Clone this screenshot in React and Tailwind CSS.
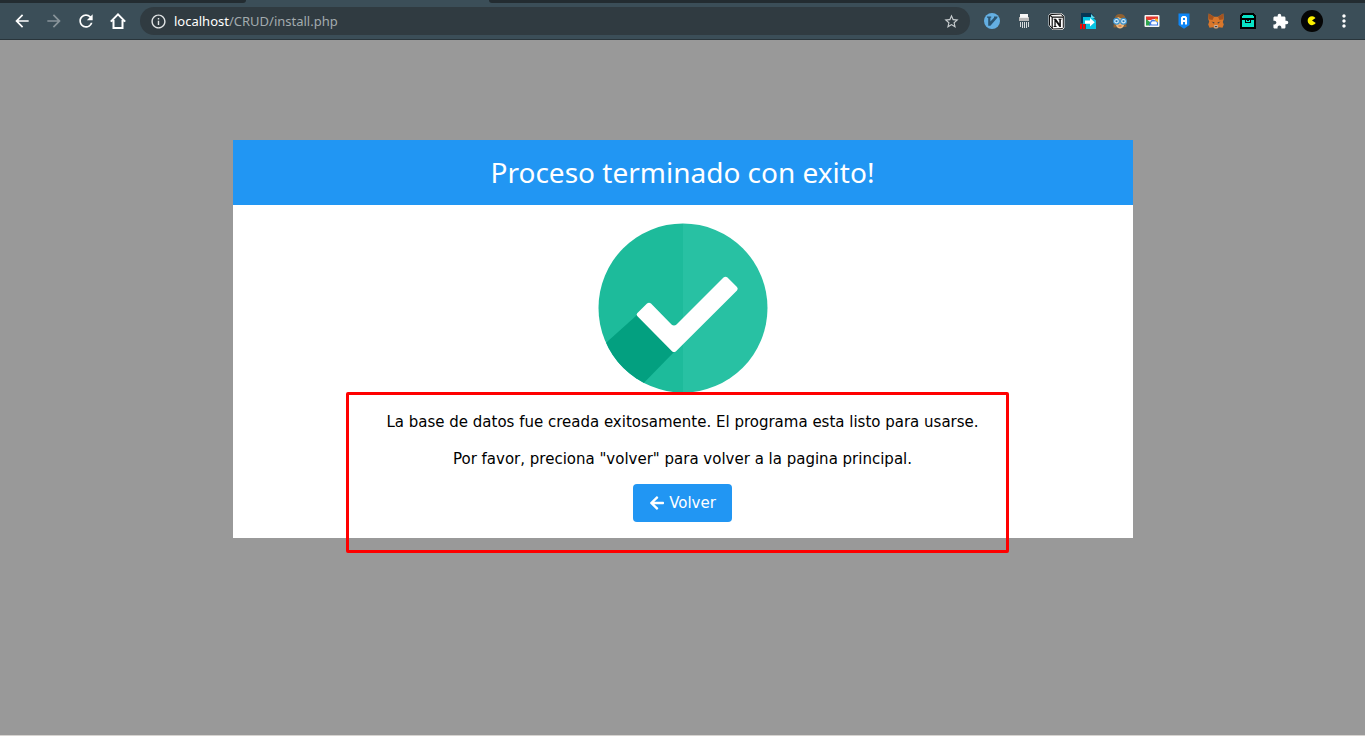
import React from "react";
import { FaArrowLeft } from "react-icons/fa";
import {
  MdArrowBack,
  MdArrowForward,
  MdRefresh,
  MdInfoOutline,
  MdStarBorder,
  MdExtension,
  MdMoreVert,
} from "react-icons/md";

function ToolButton({ label, children, className = "" }) {
  return (
    <button
      type="button"
      aria-label={label}
      className={`flex h-8 w-8 shrink-0 items-center justify-center ${className}`}
    >
      {children}
    </button>
  );
}

function HomeIcon() {
  return (
    <svg width="16" height="16" viewBox="0 0 16 16" fill="none" stroke="#fff" strokeWidth="2">
      <path d="M0.8 8.6 8 1.4l7.2 7.2M3.5 7v8h9V7" />
    </svg>
  );
}

function VimIcon() {
  return (
    <svg width="16" height="16" viewBox="0 0 16 16">
      <circle cx="8" cy="8" r="8" fill="#64afe2" />
      <path d="M3 3.6h4.2v1.2h-.8v3.8L10 4.800V3.600h3.400v1.200L6.400 12.800H4.200V4.800H3z" fill="#2b5470" />
    </svg>
  );
}

function ShredderIcon() {
  return (
    <svg width="12" height="14" viewBox="0 0 12 14">
      <path d="M2 0h8v4H2z" fill="#f8f8f8" />
      <path d="M1 3h10v4H1z" fill="#b9b9b9" />
      <path d="M2 3h8v1H2z" fill="#eee" />
      <path d="M2.500 8v5M4.500 8v6M6.500 8v6M8.500 8v6M10.500 8v5" stroke="#d8dcde" strokeWidth="1" />
    </svg>
  );
}

function NotionIcon() {
  return (
    <svg width="17" height="17" viewBox="0 0 17 17">
      <path d="M1 2 2 1l11-.500L16 2.800V15l-1.200 1.200-10.300.300L1 12.500z" fill="#fff" stroke="#e9e9e9" />
      <path d="M1.500 2.200 2.500 1.600l10-.500L15.300 3v11.600l-.8 1-9.800.400-3.200-3.800z" fill="#fff" stroke="#111" strokeWidth="1" />
      <path d="m1.600 2 2.600 2.200h11M4.200 4.200v11.500" fill="none" stroke="#111" strokeWidth="1.200" />
      <path d="M5.600 5.800H8l3.300 4.600V6.800l-.9-.3v-.7h3.300v.7l-.8.300V14h-1.400L7.700 8.700v4.200l1 .300v.700H5.600v-.7l.8-.3V6.800l-.8-.3z" fill="#111" />
    </svg>
  );
}

function TransferIcon() {
  return (
    <svg width="18" height="18" viewBox="0 0 18 18">
      <path d="M2 1h10l3 3v7H2z" fill="#053655" />
      <path d="M4 5h9l4 3.500V17H4z" fill="#08c5e4" />
      <path d="M12 2v4h4z" fill="#63d6e7" />
      <path d="M6 8.500h5V6l4.700 4.200L11 14.500v-2.700H6z" fill="#fff" />
      <path d="M1 12h6v5H1z" fill="#3b4e58" />
      <path d="M1 12h2v5H1zM4 12h2v5H4z" fill="#f80505" />
    </svg>
  );
}

function FaceIcon() {
  return (
    <svg width="16" height="16" viewBox="0 0 16 16">
      <path d="M1.500 14.500C2 9 1.500 1 8 1s6 6 6.500 13z" fill="#8f6131" />
      <path d="M3.500 7 6 4l6.500 3v4Q11 15.500 8 15.500T3.500 11z" fill="#efbc7f" />
      <circle cx="4.500" cy="8.200" r="2.900" fill="#e6f6ff" stroke="#358fcc" strokeWidth="1.200" />
      <circle cx="11.500" cy="8.200" r="2.900" fill="#e6f6ff" stroke="#358fcc" strokeWidth="1.200" />
      <path d="M3.500 7.200h2v2h-2zm7 0h2v2h-2z" fill="#2478b2" />
      <path d="M6.500 13h3" stroke="#b65537" />
    </svg>
  );
}

function GalleryIcon() {
  return (
    <svg width="16" height="14" viewBox="0 0 16 14">
      <rect x=".5" y="1" width="15" height="12" rx="1" fill="#f5f5f5" />
      <path d="M2 2.500h12V6Q10 4 7 6L4 6 2 9z" fill="#e5382e" />
      <path d="M2 5l4 3v3.500H2z" fill="#2ea44d" />
      <path d="M11 4.500q2 0 3 1v3h-3z" fill="#fbc02d" />
      <path d="M6 8q2-4 6-1l2 1.500v3H5z" fill="#3f7be8" />
      <path d="M7.500 10.500a2 2 0 0 1 2.500-3 2 2 0 0 1 3 1.500v1.500z" fill="#fff" />
    </svg>
  );
}

function BadgeIcon() {
  return (
    <svg width="12" height="16" viewBox="0 0 12 16">
      <path d="M.5.500h11V12L6 15.800.500 12z" fill="#0e86f5" />
      <path d="M3 11.500V4.500L4.500 3h3L9 4.500v7H7V9H5v2.500zM5 5v2h2V5z" fill="#fff" fillRule="evenodd" />
    </svg>
  );
}

function FoxIcon() {
  return (
    <svg width="16" height="16" viewBox="0 0 16 16">
      <path d="M.7.500 6 3.800h4L15.300.500l.5 5.500-1 3 1 2.500-1.300 3.300-3.500-.5L9 15.500H7L5 14.300l-3.500.500L.2 11.500l1-3-1-2.500z" fill="#d9772b" />
      <path d="M.7.500 6 3.800 4.500 7l-4-.8zM15.300.500 10 3.800 11.500 7l4-.8z" fill="#a3531f" />
      <path d="m3.500 8.500 3 1-.5 1.200zM12.500 8.500l-3 1 .5 1.200z" fill="#343b42" />
      <path d="m5.800 12.500 2.200-.5 2.200.5-.7 2.700h-3z" fill="#c7b8ac" />
      <path d="M6.800 13h2.400v1.200H6.800z" fill="#4a4442" />
    </svg>
  );
}

function ChestIcon() {
  return (
    <svg width="16" height="16" viewBox="0 0 16 16" shapeRendering="crispEdges">
      <path d="M2 0h12v1h1v1h1v14H0V2h1V1h1z" fill="#000" />
      <path d="M3 2h10v1h1v2H2V3h1z" fill="#08e2c6" />
      <path d="M2 7h5v1h2V7h5v7H2z" fill="#08e2c6" />
      <path d="M5 7h6v3H5z" fill="#000" />
      <path d="M6 7h4v2H6z" fill="#08e2c6" />
      <path d="M7 7h2v1H7z" fill="#000" />
    </svg>
  );
}

function ProfileIcon() {
  return (
    <svg width="22" height="22" viewBox="0 0 22 22">
      <circle cx="11" cy="11" r="11" fill="#050505" />
      <path d="M14.500 8A4.400 4.400 0 1 0 14.800 13L11 10.500z" fill="#fcf000" />
    </svg>
  );
}

const extensions = [
  ["Vim", VimIcon],
  ["Limpiar", ShredderIcon],
  ["Notion", NotionIcon],
  ["Transferir", TransferIcon],
  ["Avatar", FaceIcon],
  ["Galería", GalleryIcon],
  ["Insignia", BadgeIcon],
  ["MetaMask", FoxIcon],
  ["Cofre", ChestIcon],
];

function BrowserBar() {
  return (
    <header className="shrink-0 bg-[#3b4e58]">
      <div className="flex h-[3px]">
        <div className="w-[246px] rounded-br-sm bg-[#232c31]" />
        <div className="w-[243px]" />
        <div className="flex-1 rounded-bl-sm bg-[#232c31]" />
      </div>
      <div className="flex h-[37px] items-center border-b border-[#29353b] pl-[6px] pr-[5px]">
        <ToolButton label="Atrás" className="text-white"><MdArrowBack size={20} /></ToolButton>
        <ToolButton label="Adelante" className="text-[#89949a]"><MdArrowForward size={20} /></ToolButton>
        <ToolButton label="Recargar" className="text-white"><MdRefresh size={20} /></ToolButton>
        <ToolButton label="Inicio"><HomeIcon /></ToolButton>
        <div className="ml-[6px] flex h-7 min-w-0 flex-1 items-center rounded-full bg-[#303b41] px-[10px]">
          <MdInfoOutline size={17} className="shrink-0 text-[#e2e5e6]" />
          <a
            href="#install"
            className="ml-[7px] min-w-0 flex-1 truncate font-['Noto_Sans',sans-serif] text-[13px] leading-5 text-[#a3abae]"
          >
            <span className="text-white">localhost</span>/CRUD/install.php
          </a>
          <button type="button" aria-label="Marcar página" className="text-[#c8cdcf]">
            <MdStarBorder size={17} />
          </button>
        </div>
        <div className="ml-[6px] flex">
          {extensions.map(([label, Icon]) => (
            <ToolButton key={label} label={label}><Icon /></ToolButton>
          ))}
          <ToolButton label="Extensiones" className="text-white"><MdExtension size={17} /></ToolButton>
          <ToolButton label="Perfil"><ProfileIcon /></ToolButton>
          <ToolButton label="Menú" className="text-white"><MdMoreVert size={20} /></ToolButton>
        </div>
      </div>
    </header>
  );
}

function SuccessIcon() {
  return (
    <svg width="170" height="170" viewBox="0 0 170 170" role="img" aria-label="Éxito">
      <defs>
        <clipPath id="disc"><circle cx="85" cy="85" r="84.500" /></clipPath>
      </defs>
      <g clipPath="url(#disc)">
        <path d="M0 0h85v170H0z" fill="#1dbb9b" />
        <path d="M85 0h85v170H85z" fill="#28c1a3" />
        <path d="M39 92 0 127v43h36l41-42z" fill="#03a080" />
      </g>
      <path
        d="M39.200 90.200Q38 91.500 39.200 93L74 128.200Q76 130 78 128.200L139 67.500Q140.500 65.800 139 64L129.500 54.500Q127.500 53 125.500 54.500L78.500 101.500Q76 103.500 73.500 101.500L53 80.500Q51 79 49 80.500Z"
        fill="#fff"
      />
    </svg>
  );
}

export default function App() {
  return (
    <div className="flex min-h-screen flex-col border-b border-[#d7d4d1] bg-[#999] font-[Verdana,'DejaVu_Sans',sans-serif] text-[15px] text-black">
      <BrowserBar />
      <main className="flex-1 px-4 pt-[100px] pb-8">
        <section className="relative mx-auto max-w-[900px] bg-white text-center">
          <h1 className="bg-[#2196f3] px-4 py-[10px] font-['Noto_Sans',sans-serif] text-[28px] leading-[45px] text-white">
            Proceso terminado con exito!
          </h1>
          <div className="flex flex-col items-center px-4 pt-[18px] pb-4">
            <SuccessIcon />
            <p className="mt-[18px] leading-[22px]">
              La base de datos fue creada exitosamente. El programa esta listo para usarse.
            </p>
            <p className="mt-[15px] leading-[22px]">
              Por favor, preciona "volver" para volver a la pagina principal.
            </p>
            <button
              type="button"
              className="mt-[14px] flex items-center gap-1 rounded bg-[#2196f3] px-4 py-[7px] leading-6 text-white"
            >
              <FaArrowLeft size={16} />
              Volver
            </button>
          </div>
          <div
            aria-hidden="true"
            className="pointer-events-none absolute top-[252px] right-[124px] bottom-[-15px] left-[113px] rounded-xs border-3 border-[#ff0000]"
          />
        </section>
      </main>
    </div>
  );
}
